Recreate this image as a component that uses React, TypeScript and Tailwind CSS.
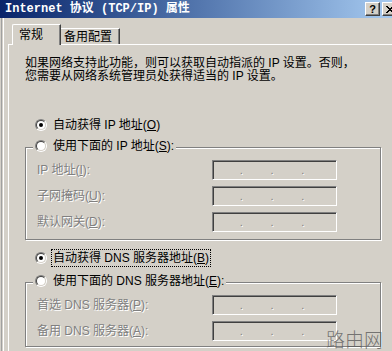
import React from 'react';

const FONT = "font-['Liberation_Sans','Noto_Sans_CJK_SC',sans-serif]";
const TITLE_FONT = "font-['Liberation_Mono','Noto_Sans_CJK_SC',monospace]";
const disabled = 'text-[#808080] [text-shadow:1px_1px_0_#ffffff]';

function Key({ k }: { k: string }) {
  return <span className="underline underline-offset-[1px]">{k}</span>;
}

function Radio({ checked = false }: { checked?: boolean }) {
  return (
    <span className="flex h-[12px] w-[12px] shrink-0 rounded-full border border-t-[#808080] border-l-[#808080] border-r-white border-b-white">
      <span className="flex flex-1 items-center justify-center rounded-full border border-t-[#404040] border-l-[#404040] border-r-[#d4d0c8] border-b-[#d4d0c8] bg-white">
        {checked && <span className="h-[4px] w-[4px] rounded-full bg-black" />}
      </span>
    </span>
  );
}

function IpBox() {
  return (
    <div className="flex h-[20px] w-[125px] shrink-0 border border-t-[#808080] border-l-[#808080] border-r-white border-b-white shadow-[inset_1px_1px_0_#404040]">
      {[0, 1, 2, 3].map((i) => (
        <div key={i} className={`flex flex-1 items-center justify-end pr-[1px] text-[11px] leading-none ${disabled}`}>
          {i < 3 ? '.' : ''}
        </div>
      ))}
    </div>
  );
}

function Field({ label }: { label: React.ReactNode }) {
  return (
    <div className="flex h-[20px] items-center">
      <span className={`w-[175px] whitespace-nowrap ${disabled}`}>{label}</span>
      <IpBox />
    </div>
  );
}

function GroupBox({ legend, children, className }: { legend: React.ReactNode; children: React.ReactNode; className: string }) {
  return (
    <div
      className={`relative w-[356px] border border-[#808080] pl-[11px] pt-[12px] shadow-[inset_1px_1px_0_#ffffff,1px_1px_0_#ffffff] ${className}`}
    >
      <div className="absolute -top-[10px] left-[7px] flex h-[16px] items-center gap-[6px] bg-[#d4d0c8] px-[2px]">
        <Radio />
        <span className="whitespace-nowrap">{legend}</span>
      </div>
      <div className="flex flex-col gap-[6px]">{children}</div>
    </div>
  );
}

export default function App() {
  return (
    <div className={`relative h-[351px] w-[392px] overflow-hidden bg-[#d4d0c8] text-[12px] text-black ${FONT}`}>
      {/* title bar */}
      <div className="flex h-[18px] items-center bg-linear-to-r from-[#0a246a] to-[#a6caf0] pl-[5px]">
        <span className={`flex-1 whitespace-nowrap font-bold text-white ${TITLE_FONT}`}>Internet 协议 (TCP/IP) 属性</span>
        <div className="-mr-[6px] flex shrink-0 gap-[2px]">
          <div className="flex h-[14px] w-[15px] items-center justify-center border border-t-white border-l-white border-r-[#404040] border-b-[#404040] bg-[#d4d0c8] text-[11px] font-bold leading-none shadow-[inset_-1px_-1px_0_#808080]">
            ?
          </div>
          <div className="flex h-[14px] w-[16px] items-center justify-center border border-t-white border-l-white border-r-[#404040] border-b-[#404040] bg-[#d4d0c8] shadow-[inset_-1px_-1px_0_#808080]">
            <svg width="8" height="7" viewBox="0 0 8 7">
              <path d="M0 0 L7 7 M1 0 L8 7 M7 0 L0 7 M8 0 L1 7" stroke="#000" strokeWidth="1" />
            </svg>
          </div>
        </div>
      </div>

      {/* body */}
      <div className="flex h-[333px] pl-[8px] shadow-[inset_1px_0_0_#d4d0c8,inset_2px_0_0_#a0a0a0,inset_3px_0_0_#d4d0c8,inset_4px_0_0_#ffffff]">
        <div className="flex flex-1 flex-col">
          {/* tabs */}
          <div className="flex h-[26px] shrink-0 items-end pl-[4px]">
            <div className="relative z-10 -mb-px flex h-[21px] w-[49px] items-center rounded-tl-[2px] border-t border-l border-r border-t-white border-l-white border-r-[#404040] bg-[#d4d0c8] pl-[6px] pb-[1px] shadow-[inset_-1px_0_0_#808080]">
              常规
            </div>
            <div className="flex h-[16px] w-[59px] items-center border-t border-r border-t-white border-r-[#404040] pl-[3px] shadow-[inset_-1px_0_0_#808080]">
              备用配置
            </div>
          </div>

          {/* panel */}
          <div className="flex flex-1 flex-col border-t border-l border-white pl-[16px]">
            <p className="mt-[12px] whitespace-nowrap leading-[13px]">
              如果网络支持此功能，则可以获取自动指派的 IP 设置。否则，
              <br />
              您需要从网络系统管理员处获得适当的 IP 设置。
            </p>

            <div className="mt-[34px] flex h-[16px] items-center gap-[6px] pl-[10px]">
              <Radio checked />
              <span className="whitespace-nowrap">
                自动获得 IP 地址(<Key k="O" />)
              </span>
            </div>

            <GroupBox
              className="mt-[14px] h-[93px]"
              legend={
                <>
                  使用下面的 IP 地址(<Key k="S" />):
                </>
              }
            >
              <Field label={<>IP 地址(<Key k="I" />):</>} />
              <Field label={<>子网掩码(<Key k="U" />):</>} />
              <Field label={<>默认网关(<Key k="D" />):</>} />
            </GroupBox>

            <div className="mt-[10px] flex h-[16px] items-center gap-[4px] pl-[10px]">
              <Radio checked />
              <span className="flex h-[18px] items-center whitespace-nowrap border border-dotted border-black px-[1px]">
                自动获得 DNS 服务器地址(<Key k="B" />)
              </span>
            </div>

            <GroupBox
              className="mt-[16px] h-[65px]"
              legend={
                <>
                  使用下面的 DNS 服务器地址(<Key k="E" />):
                </>
              }
            >
              <Field label={<>首选 DNS 服务器(<Key k="P" />):</>} />
              <Field label={<>备用 DNS 服务器(<Key k="A" />):</>} />
            </GroupBox>
          </div>
        </div>
      </div>

      {/* watermark */}
      <div className="absolute bottom-[3px] right-[9px] font-['Noto_Sans_CJK_SC',sans-serif] text-[19px] font-light leading-none text-[#5a5a5a]/80">
        路由网
      </div>
    </div>
  );
}
